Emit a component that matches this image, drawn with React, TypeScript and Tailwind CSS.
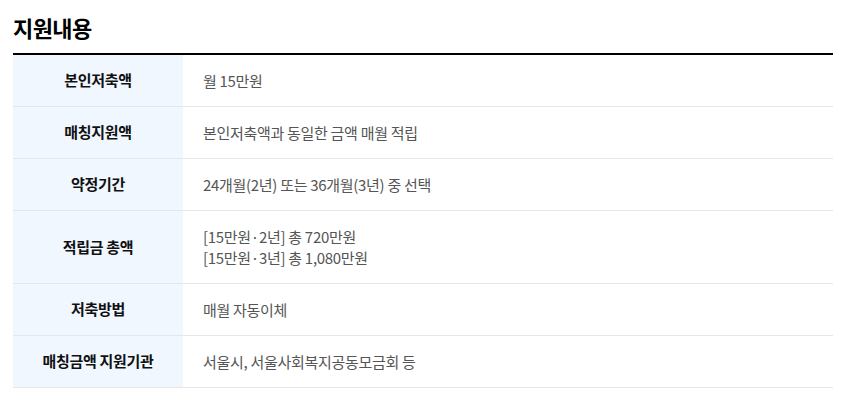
const rows: { label: string; value: string[] }[] = [
  { label: '본인저축액', value: ['월 15만원'] },
  { label: '매칭지원액', value: ['본인저축액과 동일한 금액 매월 적립'] },
  { label: '약정기간', value: ['24개월(2년) 또는 36개월(3년) 중 선택'] },
  { label: '적립금 총액', value: ['[15만원·2년] 총 720만원', '[15만원·3년] 총 1,080만원'] },
  { label: '저축방법', value: ['매월 자동이체'] },
  { label: '매칭금액 지원기관', value: ['서울시, 서울사회복지공동모금회 등'] },
];

export default function App() {
  return (
    <div
      className="bg-white w-[858px] h-[407px] pl-[13px] pr-[25px] pt-[12px]"
      style={{ fontFamily: '"Noto Sans CJK KR", "Noto Sans", sans-serif' }}
    >
      {/* Title */}
      <h2 className="text-[22px] leading-[30px] font-bold text-black tracking-[-0.6px]">지원내용</h2>

      {/* Table */}
      <div className="mt-[11px] border-t-2 border-black">
        {rows.map((row, i) => (
          <div key={i} className="flex border-b border-[#e6e6e6]">
            <div className="w-[170px] shrink-0 bg-[#f0f7ff] flex items-center justify-center text-[15px] font-bold text-[#111] tracking-[-0.3px]">
              {row.label}
            </div>
            <div className="flex-1 py-[15px] px-[20px] text-[15px] leading-[21px] text-[#555] tracking-[-0.3px]">
              {row.value.map((v, j) => (
                <p key={j}>{v}</p>
              ))}
            </div>
          </div>
        ))}
      </div>
    </div>
  );
}
